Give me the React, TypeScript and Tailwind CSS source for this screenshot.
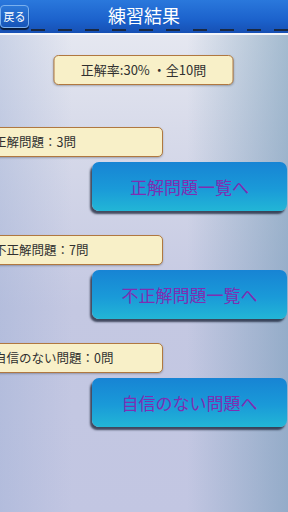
import { ReactNode } from 'react';

// ═══════════════════════════════════════
// 練習結果 — result screen
// ═══════════════════════════════════════

const ROWS = [
  { label: '正解問題：3問', button: '正解問題一覧へ' },
  { label: '不正解問題：7問', button: '不正解問題一覧へ' },
  { label: '自信のない問題：0問', button: '自信のない問題へ' },
];

const FONT = "font-['Noto_Sans_CJK_JP','Noto_Sans',sans-serif]";

function LabelBox({ children }: { children: ReactNode }) {
  return (
    <div className="-ml-[12px] flex h-[30px] w-[175px] items-center rounded-[5px] border-[1.5px] border-[#b07840] bg-[#f8f0c8] pl-[5px] text-[12.5px] text-[#303030] shadow-[0_1px_2px_rgba(0,0,0,0.25)]">
      {children}
    </div>
  );
}

function BlueButton({ children }: { children: ReactNode }) {
  return (
    <button className="ml-[92px] mt-[5px] flex h-[49px] w-[195px] items-center justify-center rounded-[7px] bg-[linear-gradient(180deg,#1784d4_0%,#1a9ad8_55%,#22b6d6_100%)] text-[17px] text-[#7e2eb2] shadow-[-2px_3px_2px_rgba(20,30,50,0.75)]">
      {children}
    </button>
  );
}

export default function App() {
  return (
    <div
      className={`${FONT} relative h-[512px] w-[288px] overflow-hidden bg-[linear-gradient(180deg,#eaecf3_0%,#d8dbea_25%,#c4c8e2_60%,#c2c6e2_100%)]`}
    >
      {/* side shading */}
      <div className="pointer-events-none absolute inset-0 bg-[linear-gradient(90deg,rgba(150,170,210,0.35)_0%,rgba(0,0,0,0)_25%,rgba(0,0,0,0)_65%,rgba(110,150,180,0.55)_100%)]" />

      {/* Header */}
      <div className="relative h-[33px] bg-[linear-gradient(180deg,#2a78dc_0%,#1c62cc_60%,#1650b4_100%)] shadow-[0_2px_0_#f4f6fa]">
        <button className="absolute left-0 top-[5px] flex h-[23px] w-[29px] items-center justify-center rounded-[4px] border border-[#7ab0ee] bg-[linear-gradient(180deg,#2c78d8,#1654b8)] text-[11px] text-white shadow-[0_2px_1px_rgba(0,0,0,0.7)]">
          戻る
        </button>
        <div className="flex h-full items-center justify-center pb-[3px] text-[18px] text-white">
          練習結果
        </div>
        {/* dashed line */}
        <div className="absolute bottom-[2px] left-[31px] right-0 h-[2px] bg-[repeating-linear-gradient(90deg,#1a2840_0px,#1a2840_14px,transparent_14px,transparent_27px)]" />
      </div>

      <div className="relative flex flex-col">
        {/* Score */}
        <div className="mx-auto mt-[22px] flex h-[30px] w-[180px] translate-x-[-0.5px] items-center justify-center rounded-[5px] border-[1.5px] border-[#b07840] bg-[#f8f0c8] text-[13px] text-[#303030] shadow-[0_1px_2px_rgba(0,0,0,0.25)]">
          正解率:30% ・全10問
        </div>

        <div className="mt-[42px] flex flex-col gap-[24px]">
          {ROWS.map((r) => (
            <div key={r.label} className="flex flex-col">
              <LabelBox>{r.label}</LabelBox>
              <BlueButton>{r.button}</BlueButton>
            </div>
          ))}
        </div>
      </div>
    </div>
  );
}
